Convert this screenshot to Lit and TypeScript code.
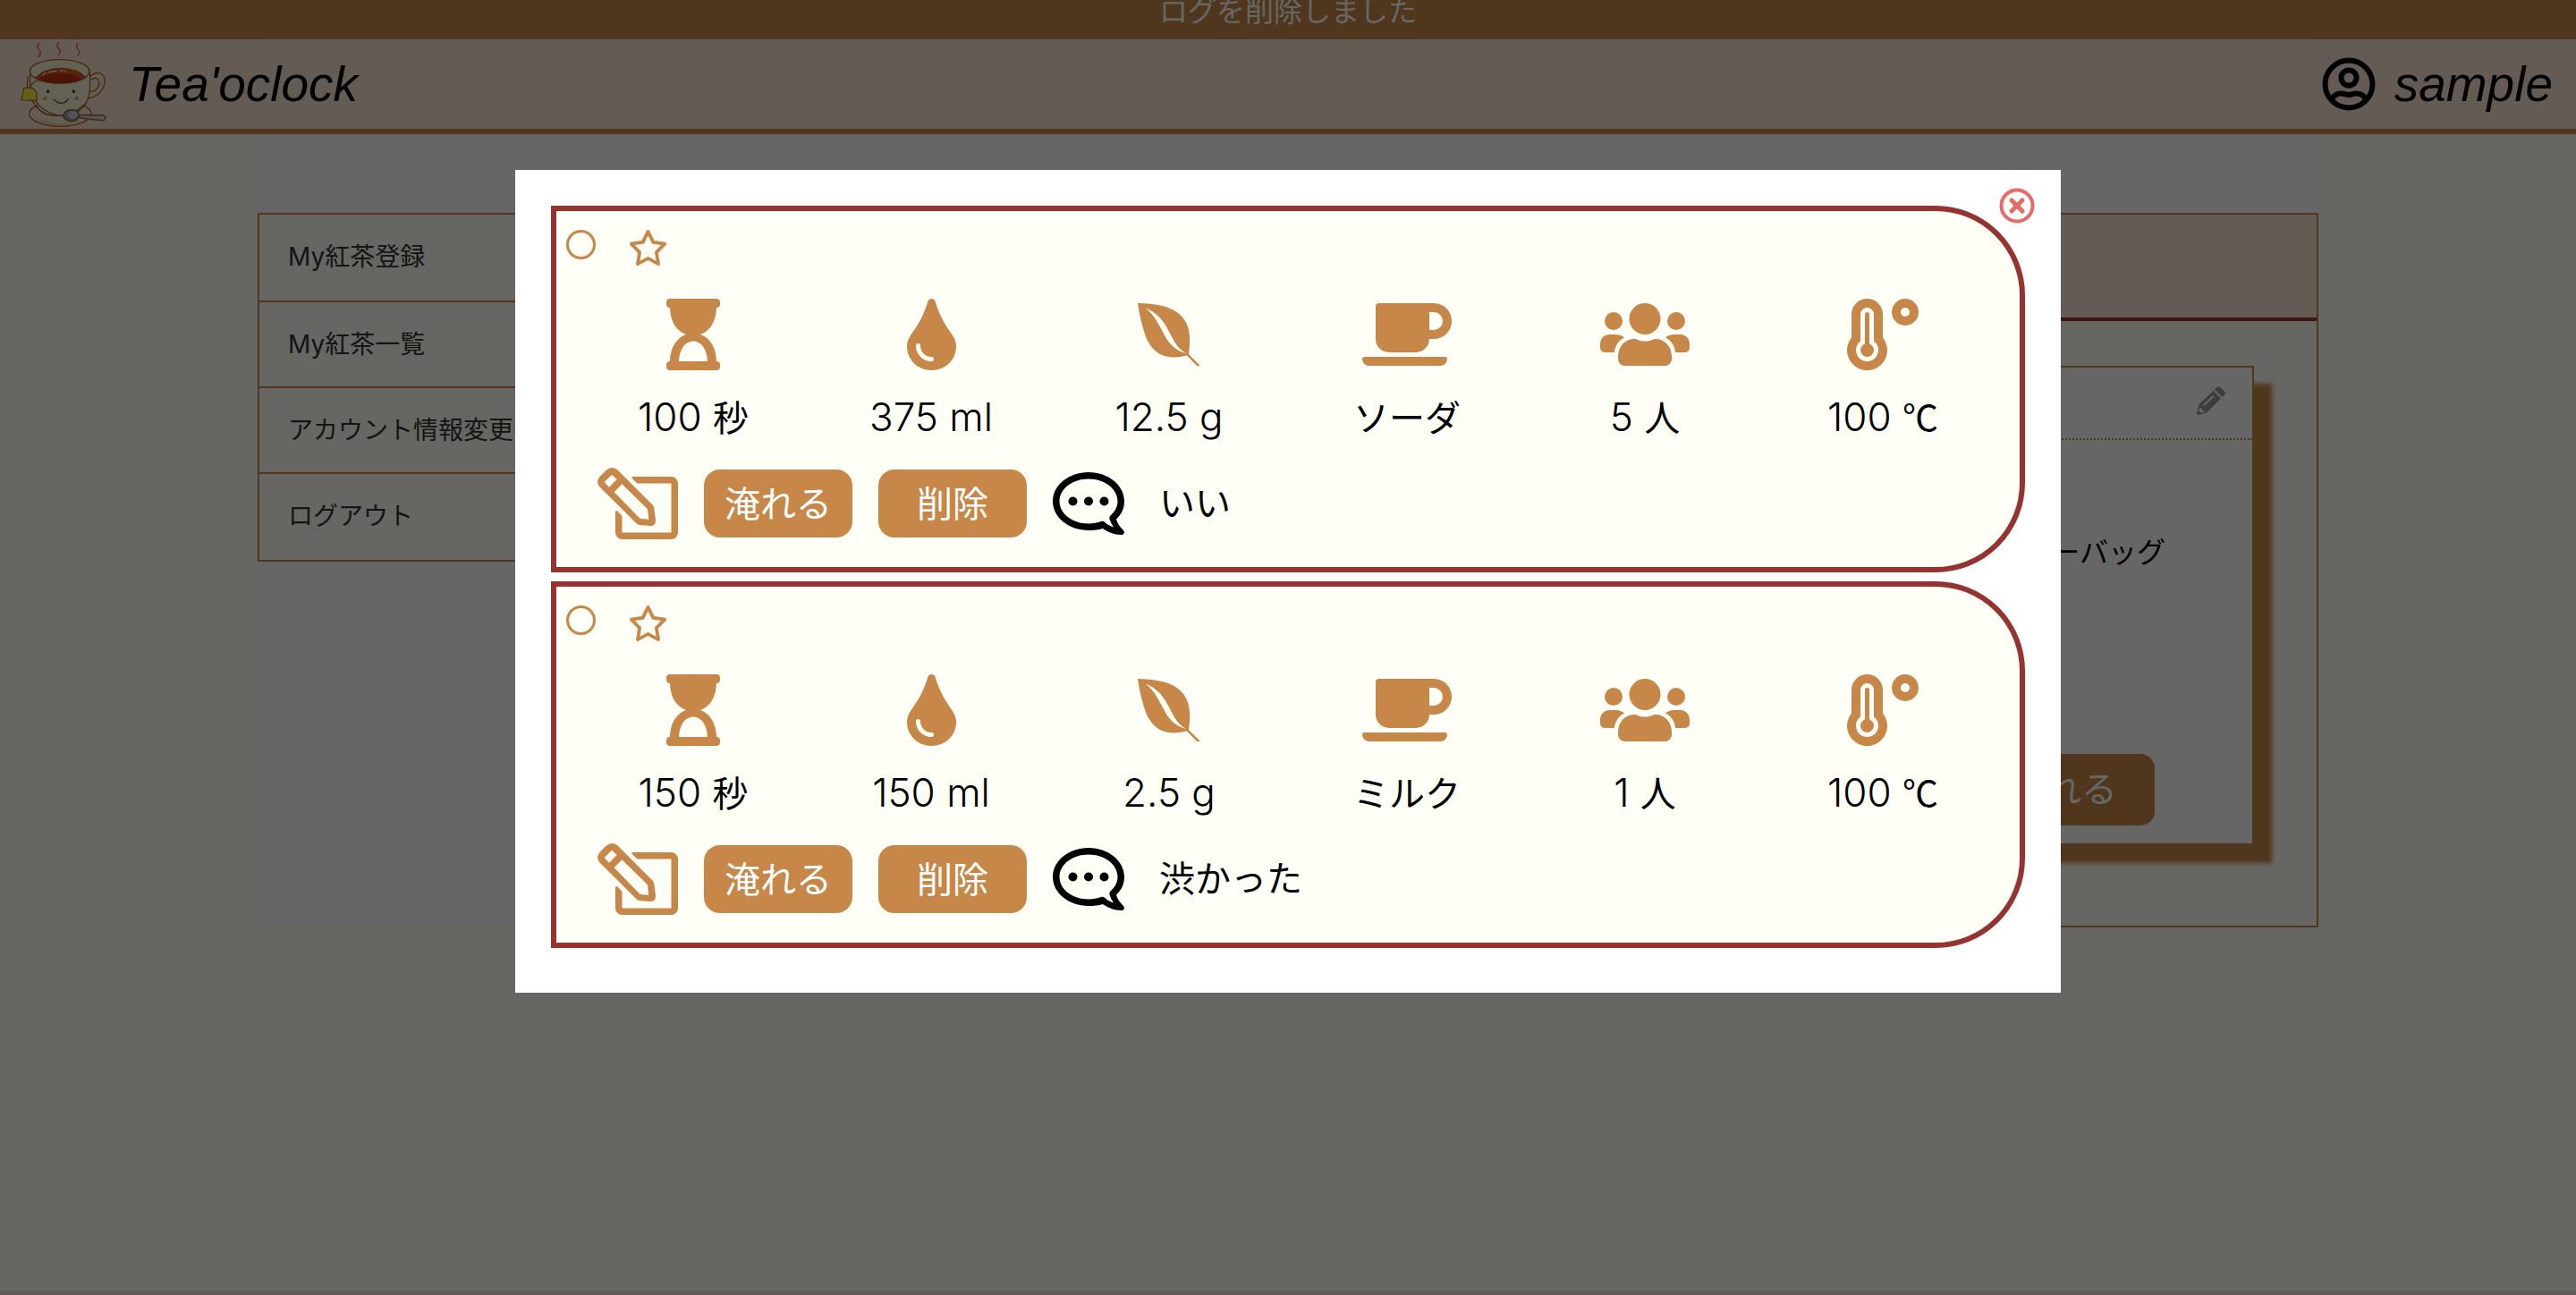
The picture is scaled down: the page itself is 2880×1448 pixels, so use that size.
import { LitElement, html, css, svg, TemplateResult } from "lit";
import { customElement, property, state } from "lit/decorators.js";

interface Measure {
  amount: string;
  unit?: string;
}

interface BrewLog {
  id: number;
  seconds: Measure;
  water: Measure;
  leaf: Measure;
  base: Measure;
  people: Measure;
  temperature: Measure;
  comment: string;
}

const LOGS: BrewLog[] = [
  {
    id: 1,
    seconds: { amount: "100 ", unit: "秒" },
    water: { amount: "375 ml" },
    leaf: { amount: "12.5 g" },
    base: { amount: "", unit: "ソーダ" },
    people: { amount: "5 ", unit: "人" },
    temperature: { amount: "100 ", unit: "℃" },
    comment: "いい",
  },
  {
    id: 2,
    seconds: { amount: "150 ", unit: "秒" },
    water: { amount: "150 ml" },
    leaf: { amount: "2.5 g" },
    base: { amount: "", unit: "ミルク" },
    people: { amount: "1 ", unit: "人" },
    temperature: { amount: "100 ", unit: "℃" },
    comment: "渋かった",
  },
];

const MENU = ["My紅茶登録", "My紅茶一覧", "アカウント情報変更", "ログアウト"];

const icon = (width: number, height: number, body: TemplateResult) => html`
  <svg width=${width} height=${height} viewBox="0 0 ${width} ${height}" fill="currentColor" aria-hidden="true">${body}</svg>
`;

const hourglass = icon(60, 80, svg`
  <path d="M4 0H56a4 4 0 0 1 4 4v2a4 4 0 0 1-4 4H4a4 4 0 0 1-4-4V4a4 4 0 0 1 4-4zM4 70H56a4 4 0 0 1 4 4v2a4 4 0 0 1-4 4H4a4 4 0 0 1-4-4V74a4 4 0 0 1 4-4z"/>
  <path d="M4 9C4 25 11 36 22 40H38C49 36 56 25 56 9zM22 40C11 44 4 55 4 71H14C14 57 21 47.5 30 47.5S46 57 46 71H56C56 55 49 44 38 40z"/>`);

const drop = icon(55, 80, svg`
  <path d="M27.5 0C25.5 0 24 1.2 23.3 3.2C18 21 11.500 30 6 38C2 44 0 48 0 53C0 68.500 12 80 27.500 80S55 68.500 55 53C55 48 53 44 49 38C43.500 30 37 21 31.700 3.200C31 1.200 29.500 0 27.500 0z"/>
  <path d="M12.500 52.500C12.500 61 19 67.500 27.500 67.500" fill="none" stroke="#fffff7" stroke-width="5" stroke-linecap="round"/>`);

const leaf = icon(70, 70, svg`
  <path d="M0 0C22 .5 36 4 45 11C58 21 60 36 57 57L70 70H66L55 58.500C42 61.500 33 61 25 57C17 52.500 13 46 10 40C7 32 3 20 0 0z"/>
  <path d="M8.500 5.500C20 10 27 17 33 28C39 39 43 50 54 56C43 53 36 47 30 36C24 25 19 13 8.500 5.500z" fill="#fffff7"/>`);

const mug = icon(100, 70, svg`
  <path fill-rule="evenodd" d="M18.750 0H80a20 20 0 0 1 0 40H75a15 15 0 0 1-15 15H30a15 15 0 0 1-15-15V3.750A3.750 3.750 0 0 1 18.750 0zM75 10V30h5a10 10 0 0 0 0-20zM2.500 60H92.500a2.500 2.500 0 0 1 2.500 2.500a7.500 7.500 0 0 1-7.500 7.500H7.500a7.500 7.500 0 0 1-7.500-7.500A2.500 2.500 0 0 1 2.500 60z"/>`);

const people = icon(100, 70, svg`
  <circle cx="50" cy="17.5" r="17.5"/><circle cx="15" cy="20" r="10"/><circle cx="85" cy="20" r="10"/>
  <path d="M38 40C40 40 41 40.500 42 41C47 43 53 43 58 41C59 40.500 60 40 62 40C72 40 80 48 80 60V62.500A7.500 7.500 0 0 1 72.500 70H27.500A7.500 7.500 0 0 1 20 62.500V60C20 48 28 40 38 40z"/>
  <path d="M10 35H17C21 35 25 36.500 27 38.500C20 42 16.500 48 16 55H5A5 5 0 0 1 0 50V45A10 10 0 0 1 10 35zM90 35H83C79 35 75 36.500 73 38.500C80 42 83.500 48 84 55H95A5 5 0 0 0 100 50V45A10 10 0 0 0 90 35z"/>`);

const thermometer = icon(80, 80, svg`
  <path d="M5 17.500a17.500 17.500 0 0 1 35 0V43.500A22.500 22.500 0 1 1 5 43.500z"/>
  <path d="M15 17.500a7.500 7.500 0 0 1 15 0V47.500A12.500 12.500 0 1 1 15 47.500z" fill="#fffff7"/>
  <path d="M22.500 17.500V57" fill="none" stroke="currentColor" stroke-width="5" stroke-linecap="round"/>
  <circle cx="22.5" cy="57.5" r="7.5"/>
  <circle cx="65" cy="15" r="10" fill="none" stroke="currentColor" stroke-width="10"/>`);

const edit = icon(90, 80, svg`
  <path d="M39 10H82.500A7.500 7.500 0 0 1 90 17.500V72.500A7.500 7.500 0 0 1 82.500 80H27.500A7.500 7.500 0 0 1 20 72.500V50C20 48 21.500 47.500 22.700 48.800L27.500 54V72.500H82.500V17.500H44.500L39.300 12.600C38.300 11.600 38 10.300 39 10z"/>
  <path fill-rule="evenodd" d="M22.500 2.500L61.500 41.500Q63 43 63.200 45L65 58Q65.500 65 59 65L47 64Q45 63.800 43.500 62.300L2.500 21.500Q-2.500 15.500 3 9.500L9.500 3Q16-2.500 22.500 2.500zM7.700 16L13 21.700L21.700 13L16 7.700zM18.700 27.300L47.700 57L57.300 57.700L56 46.300L27.300 18.300z"/>`);

const comment = icon(80, 70, svg`
  <path fill-rule="evenodd" d="M40 0C62 0 80 14.500 80 32.500C80 40 77 47 71 52.500C72 57 75 61 79 65C81 67.500 79.500 70 77 70C68 70 61 66.500 56 63C51 64.500 46 65 40 65C18 65 0 50.500 0 32.500S18 0 40 0zM40 7.500C22 7.500 7.500 18.500 7.500 32.500S22 57.500 40 57.500C45 57.500 50 56.500 54 55C55.500 54.500 57 54.800 58 55.800C61 58.500 64 60.500 68 61.500C66 58.500 64.500 55.500 63.500 52.500C63 51 63.500 49.500 64.500 48.500C70 43.500 72.500 38 72.500 32.500C72.500 18.500 58 7.500 40 7.500z"/>
  <circle cx="22.5" cy="32.500" r="5"/><circle cx="40" cy="32.500" r="5"/><circle cx="57.500" cy="32.500" r="5"/>`);

const star = html`
  <svg width="45" height="40" viewBox="0 0 576 512" fill="currentColor" aria-hidden="true">
    <path d="M287.9 0c9.2 0 17.6 5.2 21.6 13.5l68.6 141.3 153.2 22.6c9 1.3 16.5 7.6 19.3 16.3s.5 18.1-5.9 24.5L433.6 328.400l26.200 155.600c1.500 9-2.200 18.100-9.600 23.500s-17.300 6-25.300 1.700l-137-73.200L151 509.100c-8.100 4.300-17.900 3.700-25.300-1.700s-11.200-14.500-9.700-23.500l26.200-155.600L31.100 218.200c-6.500-6.400-8.700-15.900-5.900-24.500s10.300-14.900 19.300-16.300l153.200-22.600L266.300 13.500C270.400 5.200 278.700 0 287.900 0zm0 79L235.400 187.200c-3.500 7.100-10.200 12.100-18.100 13.300L99 217.900 184.900 303c5.500 5.500 8.100 13.300 6.800 21L171.400 443.700l105.200-56.200c7.100-3.800 15.600-3.800 22.600 0l105.200 56.200L384.200 324.100c-1.300-7.700 1.200-15.500 6.800-21l85.900-85.100L358.600 200.500c-7.800-1.200-14.600-6.100-18.100-13.300L287.900 79z"/>
  </svg>`;

const closeIcon = icon(40, 40, svg`
  <circle cx="20" cy="20" r="17.5" fill="none" stroke="currentColor" stroke-width="4"/>
  <path d="M14 14L26 26M26 14L14 26" fill="none" stroke="currentColor" stroke-width="5" stroke-linecap="round"/>`);

const user = icon(60, 60, svg`
  <g fill="none" stroke="currentColor" stroke-width="6">
    <circle cx="30" cy="30" r="26.500"/>
    <circle cx="30" cy="23" r="8.500"/>
    <path d="M11 47C13.500 42 17 40.500 21.500 40.500C25 40.500 26 42 30 42S35 40.500 38.500 40.500C43 40.500 46.500 42 49 47"/>
  </g>`);

const pencil = icon(32, 32, svg`
  <path fill-rule="evenodd" d="M2.500 20L18.500 5L27 13.500L11 29.500L2 32Q0 32 0 30zM7 20.500L18 10L19.500 11.500L8.500 22zM3.500 24L2.500 27.500L5 29.500L8.500 28.500L8 26.500L5.500 26.500L5.500 24z"/>
  <path d="M20 3.500L22.500 1Q24.500-.5 26.500 1.300L31 5.800Q32.800 8 31 9.800L28.500 12z"/>`);

const logo = html`
  <svg width="98" height="98" viewBox="65 12 294 294" fill="none" stroke="#b4602c" stroke-width="4" stroke-linecap="round" stroke-linejoin="round" aria-hidden="true">
    <g stroke="#ea5058"><path d="M130 22Q120 32 130 44Q140 56 128 67"/><path d="M196 19Q186 29 196 39Q205 50 195 61"/><path d="M260 22Q252 32 261 43Q271 54 258 65"/></g>
    <ellipse cx="201" cy="259" rx="104" ry="42" fill="#f6eccb"/>
    <path d="M136 280Q195 305 262 282" stroke="#f0d09c" stroke-width="7"/>
    <path d="M302 133Q322 114 340 126Q358 140 345 172Q332 200 296 207M304 145Q320 133 328 144Q337 158 326 172Q318 184 303 184" fill="#f6eccb"/>
    <path d="M101 116Q88 240 192 264Q262 270 290 218Q304 190 300 116z" fill="#f6f4d2"/>
    <ellipse cx="199" cy="116" rx="100" ry="39" fill="#f6f4d2"/>
    <path d="M117 139Q150 105 205 106Q262 108 287 137Q250 157 205 157Q150 157 117 139z" fill="#e0541c"/>
    <path d="M124 143Q160 122 205 124Q245 124 276 143Q240 156 205 156Q160 156 124 143z" fill="#b83410" stroke="none"/>
    <path d="M143 128L151 122M160 120Q172 115 188 115M203 114H208M215 115H218" stroke="#fff"/>
    <path d="M93 134Q89 155 91 174M101 172Q108 146 136 145"/>
    <path d="M79 174Q90 168 111 174L122 187V213Q95 215 70 211Q76 195 79 174z" fill="#fdf03c" stroke="#a08018"/>
    <path d="M108 215Q135 268 192 265Q250 262 284 226" stroke="#a05024"/>
    <g stroke="none"><ellipse cx="160" cy="184" rx="5" ry="6" fill="#5a3c1e"/><ellipse cx="246" cy="184" rx="5" ry="6" fill="#5a3c1e"/><circle cx="150" cy="207" r="7" fill="#f5a078"/><circle cx="256" cy="207" r="7" fill="#f5a078"/></g>
    <path d="M181 211Q190 223 206 223Q221 222 227 209" stroke="#6a4420"/>
    <path d="M258 262L342 264Q354 266 353 273Q352 282 338 281L262 272z" fill="#d8d4dc" stroke="#80583c"/>
    <ellipse cx="238" cy="264" rx="26" ry="19" fill="#a8a4b0" stroke="#70503c"/>
    <ellipse cx="244" cy="262" rx="16" ry="13" fill="#cfccd6" stroke="none"/>
  </svg>`;

@customElement("log-card")
export class LogCard extends LitElement {
  @property({ attribute: false }) log!: BrewLog;

  static styles = css`
    :host {
      display: block;
    }
    .card {
      display: flex;
      flex-direction: column;
      padding: 21px 0 31px;
      border: 6px solid #96322f;
      border-radius: 0 100px 100px 0;
      background: #fffff7;
      color: #000;
    }
    svg {
      display: block;
    }
    .marks {
      display: flex;
      align-items: flex-start;
      gap: 36px;
      padding-left: 11px;
      color: #c68748;
    }
    .pick {
      appearance: none;
      width: 33px;
      height: 33px;
      margin: 0;
      border: 3px solid #c68748;
      border-radius: 50%;
    }
    .icon-button {
      padding: 0;
      border: 0;
      background: none;
      color: #c68748;
      cursor: pointer;
    }
    .stats {
      display: grid;
      grid-template-columns: repeat(6, 1fr);
      margin: 37px 20px 0;
      padding: 0;
      list-style: none;
    }
    .stat {
      display: flex;
      flex-direction: column;
      align-items: center;
      gap: 22px;
    }
    .glyph {
      display: flex;
      align-items: center;
      height: 80px;
      color: #c68748;
    }
    .value {
      height: 60px;
      font-family: Inter, sans-serif;
      font-size: 44px;
      font-weight: 300;
      line-height: 60px;
      white-space: pre;
    }
    .unit {
      font-family: "Noto Sans CJK JP", sans-serif;
      font-size: 40px;
      font-weight: 400;
      line-height: 40px;
    }
    .actions {
      display: flex;
      align-items: center;
      gap: 29px;
      margin-top: 27px;
      padding-left: 46px;
    }
    .action {
      width: 166px;
      height: 76px;
      padding: 2px 0 0;
      border: 0;
      border-radius: 18px;
      background: #c68748;
      color: #fff;
      font: inherit;
      line-height: 74px;
      cursor: pointer;
    }
    .note {
      margin: 0 0 0 10px;
      line-height: 60px;
    }
  `;

  private stat(glyph: TemplateResult, value: Measure) {
    return html`<li class="stat">
      <span class="glyph">${glyph}</span>
      <span class="value">${value.amount}${value.unit ? html`<span class="unit">${value.unit}</span>` : null}</span>
    </li>`;
  }

  render() {
    const l = this.log;
    return html`
      <article class="card">
        <div class="marks">
          <input class="pick" type="checkbox" aria-label="選択" />
          <button class="icon-button" type="button" aria-label="お気に入り">${star}</button>
        </div>
        <ul class="stats">
          ${this.stat(hourglass, l.seconds)} ${this.stat(drop, l.water)} ${this.stat(leaf, l.leaf)}
          ${this.stat(mug, l.base)} ${this.stat(people, l.people)} ${this.stat(thermometer, l.temperature)}
        </ul>
        <div class="actions">
          <button class="icon-button" type="button" aria-label="編集">${edit}</button>
          <button class="action" type="button">淹れる</button>
          <button class="action" type="button">削除</button>
          ${comment}
          <p class="note">${l.comment}</p>
        </div>
      </article>
    `;
  }
}

@customElement("app-root")
export class AppRoot extends LitElement {
  @state() private open = true;

  static styles = css`
    :host {
      display: flex;
      flex-direction: column;
      min-height: 100vh;
      box-sizing: border-box;
      overflow: hidden;
      background: #fffff7;
      font-family: Inter, "Noto Sans CJK JP", sans-serif;
      font-weight: 400;
      font-size: 40px;
      color: #000;
    }
    svg {
      display: block;
    }
    .flash {
      margin: -18px 0 0;
      background: #c68748;
      color: #fff;
      font-size: 32px;
      line-height: 62px;
      text-align: center;
    }
    .header {
      display: flex;
      align-items: center;
      justify-content: space-between;
      height: 100px;
      padding: 0 26px 0 22px;
      border-bottom: 6px solid #c68748;
      background: linear-gradient(90deg, #fae4d3 10%, #f4e5d4 10% 90%, #fae4d3 90%);
      font: italic 400 55px "Liberation Sans", sans-serif;
    }
    .brand,
    .account {
      display: flex;
      align-items: center;
      color: inherit;
      text-decoration: none;
    }
    .brand {
      gap: 24px;
    }
    .account {
      gap: 21px;
    }
    .title {
      margin: 0;
      font: inherit;
    }
    .main {
      display: flex;
      align-items: flex-start;
      justify-content: space-between;
      width: 80%;
      margin: 0 auto;
      padding-top: 88px;
      background: #fff;
    }
    .menu {
      width: 22%;
      margin: 0;
      padding: 0;
      border: 2px solid #c68748;
      background: #fffff7;
      list-style: none;
      box-sizing: border-box;
      font-size: 28px;
      line-height: 94px;
    }
    .item {
      border-bottom: 2px solid #c68748;
    }
    .item:first-child,
    .item:last-child {
      padding-bottom: 2px;
    }
    .item:last-child {
      border-bottom: 0;
    }
    .link {
      display: block;
      padding-left: 32px;
      color: #333;
      text-decoration: none;
    }
    .panel {
      width: 75%;
      box-sizing: border-box;
      border: 2px solid #c68748;
      background: #fffff7;
    }
    .panel-head {
      height: 115px;
      border-bottom: 4px solid #96322f;
      background: #fae4d6;
    }
    .tea {
      width: 48%;
      margin: 50px 70px 90px auto;
      box-sizing: border-box;
      border: 2px solid #c68748;
      background: #fff;
      box-shadow: 20px 20px 5px #c68748;
    }
    .tea-head {
      display: flex;
      align-items: center;
      justify-content: flex-end;
      height: 73px;
      padding: 0 30px 6px 0;
      border-bottom: 2px dotted #c68748;
    }
    .edit {
      padding: 0;
      border: 0;
      background: none;
      color: #999;
      cursor: pointer;
    }
    .tea-body {
      display: flex;
      flex-direction: column;
      align-items: flex-end;
      padding: 96px 97px 20px 0;
    }
    .kind {
      margin: 0 0 195px;
      font-size: 32px;
      line-height: 60px;
    }
    .brew {
      width: 204px;
      margin-right: 12px;
      height: 80px;
      padding: 0;
      border: 0;
      border-radius: 16px;
      background: #c68748;
      color: #fff;
      font: inherit;
      line-height: 80px;
    }
    .footer {
      height: 4px;
      margin-top: auto;
      background: #fae4d6;
    }
    .overlay {
      position: fixed;
      inset: 0;
      display: flex;
      align-items: flex-start;
      justify-content: center;
      padding-top: 190px;
      background: rgba(0, 0, 0, 0.6);
    }
    .modal {
      position: relative;
      display: flex;
      flex-direction: column;
      gap: 10px;
      width: 60%;
      box-sizing: border-box;
      padding: 40px 40px 50px;
      background: #fff;
    }
    .close {
      position: absolute;
      top: 20px;
      right: 29px;
      padding: 0;
      border: 0;
      background: none;
      color: #e66a65;
      cursor: pointer;
    }
  `;

  render() {
    return html`
      <p class="flash" role="status">ログを削除しました</p>
      <header class="header">
        <a class="brand" href="#">${logo}<h1 class="title">Tea'oclock</h1></a>
        <a class="account" href="#">${user}<span>sample</span></a>
      </header>
      <main class="main">
        <ul class="menu">
          ${MENU.map((m) => html`<li class="item"><a class="link" href="#">${m}</a></li>`)}
        </ul>
        <section class="panel">
          <div class="panel-head"></div>
          <article class="tea">
            <div class="tea-head"><button class="edit" type="button" aria-label="編集">${pencil}</button></div>
            <div class="tea-body">
              <p class="kind">ティーバッグ</p>
              <button class="brew" type="button">淹れる</button>
            </div>
          </article>
        </section>
      </main>
      <footer class="footer"></footer>
      ${this.open
        ? html`
            <div class="overlay">
              <div class="modal" role="dialog" aria-modal="true">
                <button class="close" type="button" aria-label="閉じる" @click=${() => (this.open = false)}>${closeIcon}</button>
                ${LOGS.map((log) => html`<log-card .log=${log}></log-card>`)}
              </div>
            </div>
          `
        : null}
    `;
  }
}
